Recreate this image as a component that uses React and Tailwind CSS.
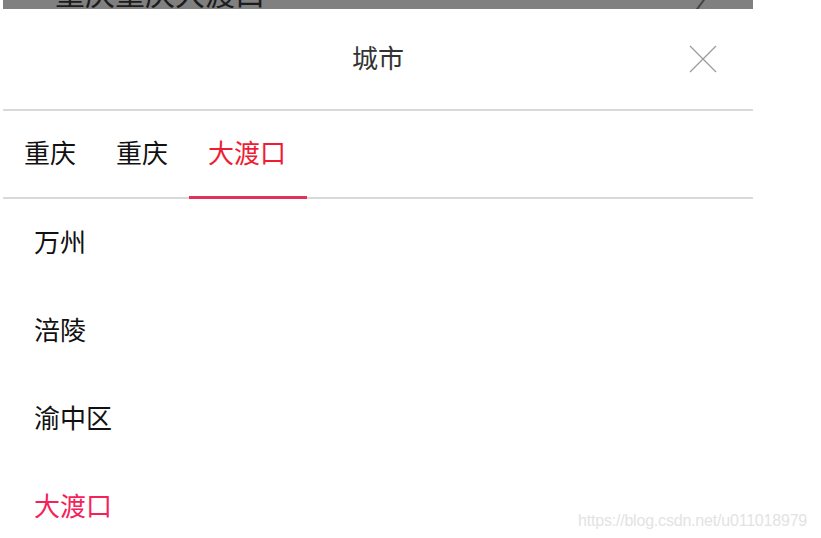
export default function App() {
  const font = { fontFamily: '"Noto Sans CJK SC", "Noto Sans", sans-serif' };
  const tabs = ["重庆", "重庆", "大渡口"];
  const items = ["万州", "涪陵", "渝中区", "大渡口"];
  return (
    <div className="relative w-[821px] h-[538px] bg-white overflow-hidden" style={font}>
      <div className="ml-[3px] w-[750px]">
        {/* dimmed page behind */}
        <div className="h-[9px] bg-[#808080] overflow-hidden flex items-start justify-between">
          <div className="ml-[52px] mt-[-23px] text-[30px] leading-[30px] text-[#1c1c1c] whitespace-nowrap">
            重庆重庆大渡口
          </div>
          <svg width="20" height="40" viewBox="0 0 20 40" className="mr-[42px] mt-[-22px]">
            <path d="M4 4 L15 19 L4 34" fill="none" stroke="#444" strokeWidth="2" />
          </svg>
        </div>
        {/* header */}
        <div className="relative h-[100px] flex items-center justify-center pb-[4px]">
          <span className="text-[26px] leading-none text-[#333]">城市</span>
          <svg
            width="28"
            height="28"
            viewBox="0 0 28 28"
            className="absolute right-[36px] top-[36px]"
          >
            <path d="M1 1 L27 27 M27 1 L1 27" stroke="#9a9a9a" strokeWidth="1.2" fill="none" />
          </svg>
        </div>
        <div className="h-[2px] bg-[#d9d9d9]" />
        {/* tabs */}
        <div className="relative h-[88px] flex pl-[1px]">
          {tabs.map((t, i) => {
            const active = i === tabs.length - 1;
            return (
              <div
                key={i}
                className={
                  "relative flex items-center px-[20px] pb-[7px] text-[26px] leading-none " +
                  (active ? "text-[#ee1d34]" : "text-[#111]")
                }
              >
                {t}
                {active && (
                  <div className="absolute left-[1px] right-[-1px] bottom-0 h-[3px] bg-[#e0325a] z-10" />
                )}
              </div>
            );
          })}
          <div className="absolute left-0 right-0 bottom-0 h-[2px] bg-[#d9d9d9]" />
        </div>
        {/* list */}
        <div className="flex flex-col">
          {items.map((t, i) => (
            <div
              key={i}
              className={
                "h-[88px] flex items-center pl-[31px] pb-[4px] text-[26px] leading-none " +
                (i === items.length - 1 ? "text-[#f5225a]" : "text-[#111]")
              }
            >
              {t}
            </div>
          ))}
        </div>
      </div>
      <div
        className="absolute left-[578px] top-[509px] text-[16px] tracking-[-0.2px] text-[#e3e3e3] whitespace-nowrap"
        style={{ fontFamily: '"Liberation Sans", Arial, sans-serif' }}
      >
        https://blog.csdn.net/u011018979
      </div>
    </div>
  );
}
